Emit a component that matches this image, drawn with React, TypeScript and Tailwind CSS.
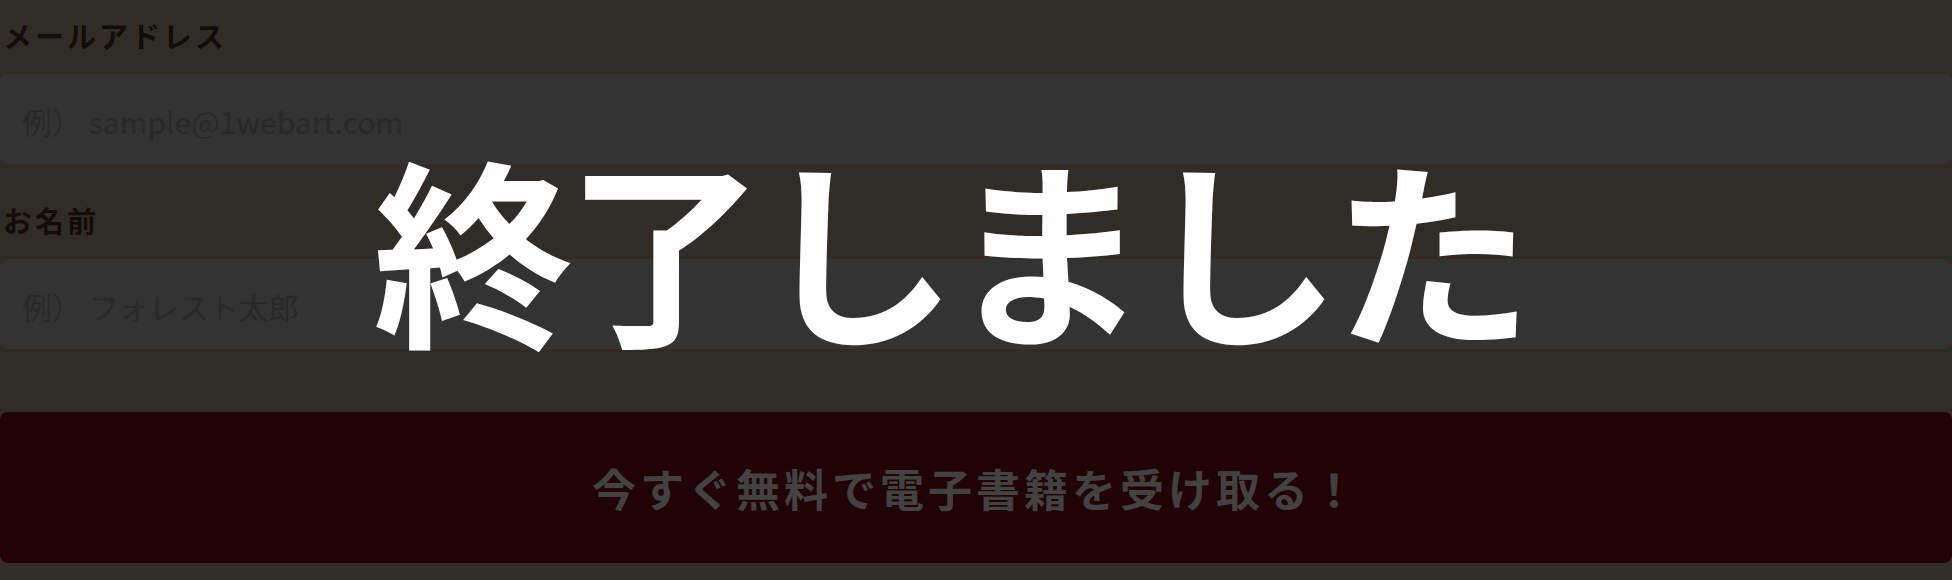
import React from "react";

const jp = { fontFamily: '"Noto Sans CJK JP", "Noto Sans", sans-serif' };

function Field({ label, placeholder }: { label: string; placeholder: string }) {
  return (
    <div className="flex flex-col">
      <label className="pl-[3px] text-[29px] font-bold leading-[40px] tracking-[3px] text-[#120c0a]">
        {label}
      </label>
      <div className="mt-[19px] flex h-[90px] items-center rounded-[8px] bg-[#333333] px-[22px] pt-[4px]">
        <span className="text-[30px] text-[#2a2a2a]">{placeholder}</span>
      </div>
    </div>
  );
}

export default function App() {
  return (
    <main className="relative h-[580px] w-full overflow-hidden bg-[#302d28]" style={jp}>
      <form className="flex flex-col pt-[15px]">
        <Field label="メールアドレス" placeholder="例） sample@1webart.com" />
        <div className="mt-[36px]">
          <Field label="お名前" placeholder="例） フォレスト太郎" />
        </div>
        <button
          type="button"
          className="mt-[63px] flex h-[151px] w-full items-center justify-center rounded-[8px] bg-[#220305] text-[44px] font-bold tracking-[4px] text-[#424242]"
        >
          今すぐ無料で電子書籍を受け取る！
        </button>
      </form>

      {/* closed notice over the form */}
      <div className="absolute inset-0 flex items-center justify-center pb-[90px] pr-[54px]">
        <p className="text-[200px] font-bold leading-none tracking-[-8px] text-white">終了しました</p>
      </div>
    </main>
  );
}
